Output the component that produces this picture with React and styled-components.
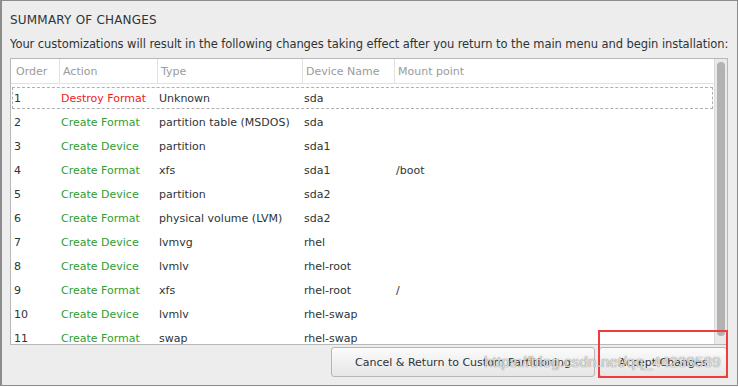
import React from 'react';
import styled, { createGlobalStyle } from 'styled-components';

const GlobalStyle = createGlobalStyle`
  body {
    margin: 0;
    background: #ffffff;
    font-family: "DejaVu Sans", "Noto Sans", sans-serif;
  }
`;

const Dialog = styled.div`
  position: relative;
  box-sizing: border-box;
  width: 738px;
  height: 386px;
  background: #ededed;
  border: 1px solid #8c8c8c;
  border-left: 2px solid #8c8c8c;
  padding: 11px 9px 0 8px;
  color: #2e3436;
  display: flex;
  flex-direction: column;
`;

const Title = styled.div`
  font-size: 12px;
  letter-spacing: 0.2px;
  line-height: 16px;
  margin-bottom: 8px;
`;

const Subtitle = styled.div`
  font-size: 11.5px;
  line-height: 16px;
  letter-spacing: -0.07px;
  white-space: nowrap;
  margin-bottom: 6px;
`;

const Frame = styled.div`
  display: flex;
  height: 287px;
  flex-shrink: 0;
  box-sizing: border-box;
  background: #ffffff;
  border: 1px solid #b8b8b8;
`;

const TableArea = styled.div`
  flex: 1;
  display: flex;
  flex-direction: column;
  overflow: hidden;
`;

const Row = styled.div`
  display: grid;
  grid-template-columns: 47px 98px 145px 92px 1fr;
  flex-shrink: 0;
  height: ${p => (p.$head ? '25px' : '24px')};
  align-items: center;
  font-size: 11px;
  box-sizing: border-box;
  border-bottom: ${p => (p.$head ? '1px solid #e2e2e2' : 'none')};
  outline: ${p => (p.$focus ? '1px dashed #b0b0b0' : 'none')};
  outline-offset: -2px;
  margin-top: ${p => (p.$focus ? '2px' : '0')};
  padding-left: 2px;
`;

const HeadCell = styled.div`
  height: 100%;
  display: flex;
  align-items: center;
  padding-left: 3px;
  color: #9b9b9b;
  border-right: ${p => (p.$last ? 'none' : '1px solid #e2e2e2')};
`;

const Cell = styled.div`
  padding-left: 1px;
  white-space: nowrap;
  color: ${p => p.$color || '#2e3436'};
`;

const Scrollbar = styled.div`
  width: 13px;
  background: #e9e9e9;
  border-left: 1px solid #dadada;
  display: flex;
  justify-content: center;
  padding: 3px 0 8px;
  box-sizing: border-box;
`;

const Thumb = styled.div`
  width: 8px;
  height: 100%;
  border-radius: 4px;
  background: #b2b2b2;
`;

const ButtonBar = styled.div`
  display: flex;
  justify-content: flex-end;
  gap: 4px;
  margin-top: 2px;
  padding-right: 1px;
`;

const Button = styled.button`
  box-sizing: border-box;
  height: 30px;
  width: ${p => p.$width}px;
  border: 1px solid #b6b6b6;
  border-radius: 3px;
  background: linear-gradient(#fbfbfb, #e6e6e6);
  font-family: "DejaVu Sans", "Noto Sans", sans-serif;
  font-size: 11px;
  color: #2e3436;
  padding: 0;
`;

const Highlight = styled.div`
  position: absolute;
  left: 596px;
  top: 329px;
  width: 126px;
  height: 44px;
  border: 2px solid #f23b3b;
`;

const Watermark = styled.div`
  position: absolute;
  left: 482px;
  top: 352px;
  font-family: "Liberation Sans", sans-serif;
  font-size: 15px;
  color: rgba(255, 255, 255, 0.75);
  text-shadow: 0 0 1px rgba(90, 90, 90, 0.7), 0 0 1px rgba(90, 90, 90, 0.5);
  letter-spacing: 0.2px;
  pointer-events: none;
`;

const RED = '#ee1c1c';
const GREEN = '#2f9e2f';

const changes = [
  ['1', 'Destroy Format', 'Unknown', 'sda', ''],
  ['2', 'Create Format', 'partition table (MSDOS)', 'sda', ''],
  ['3', 'Create Device', 'partition', 'sda1', ''],
  ['4', 'Create Format', 'xfs', 'sda1', '/boot'],
  ['5', 'Create Device', 'partition', 'sda2', ''],
  ['6', 'Create Format', 'physical volume (LVM)', 'sda2', ''],
  ['7', 'Create Device', 'lvmvg', 'rhel', ''],
  ['8', 'Create Device', 'lvmlv', 'rhel-root', ''],
  ['9', 'Create Format', 'xfs', 'rhel-root', '/'],
  ['10', 'Create Device', 'lvmlv', 'rhel-swap', ''],
  ['11', 'Create Format', 'swap', 'rhel-swap', ''],
];

const headers = ['Order', 'Action', 'Type', 'Device Name', 'Mount point'];

function App() {
  return (
    <>
      <GlobalStyle />
      <Dialog>
        <Title>SUMMARY OF CHANGES</Title>
        <Subtitle>
          Your customizations will result in the following changes taking effect after you return to the main menu and begin installation:
        </Subtitle>
        <Frame>
          <TableArea>
            <Row $head>
              {headers.map((h, i) => (
                <HeadCell key={h} $last={i === headers.length - 1}>{h}</HeadCell>
              ))}
            </Row>
            {changes.map((c, i) => (
              <Row key={c[0]} $focus={i === 0}>
                <Cell>{c[0]}</Cell>
                <Cell $color={c[1].startsWith('Destroy') ? RED : GREEN}>{c[1]}</Cell>
                <Cell>{c[2]}</Cell>
                <Cell>{c[3]}</Cell>
                <Cell>{c[4]}</Cell>
              </Row>
            ))}
          </TableArea>
          <Scrollbar>
            <Thumb />
          </Scrollbar>
        </Frame>
        <ButtonBar>
          <Button $width={264}>Cancel &amp; Return to Custom Partitioning</Button>
          <Button $width={128}>Accept Changes</Button>
        </ButtonBar>
        <Highlight />
        <Watermark>https://blog.csdn.net/qq_44238589</Watermark>
      </Dialog>
    </>
  );
}

export default App;
